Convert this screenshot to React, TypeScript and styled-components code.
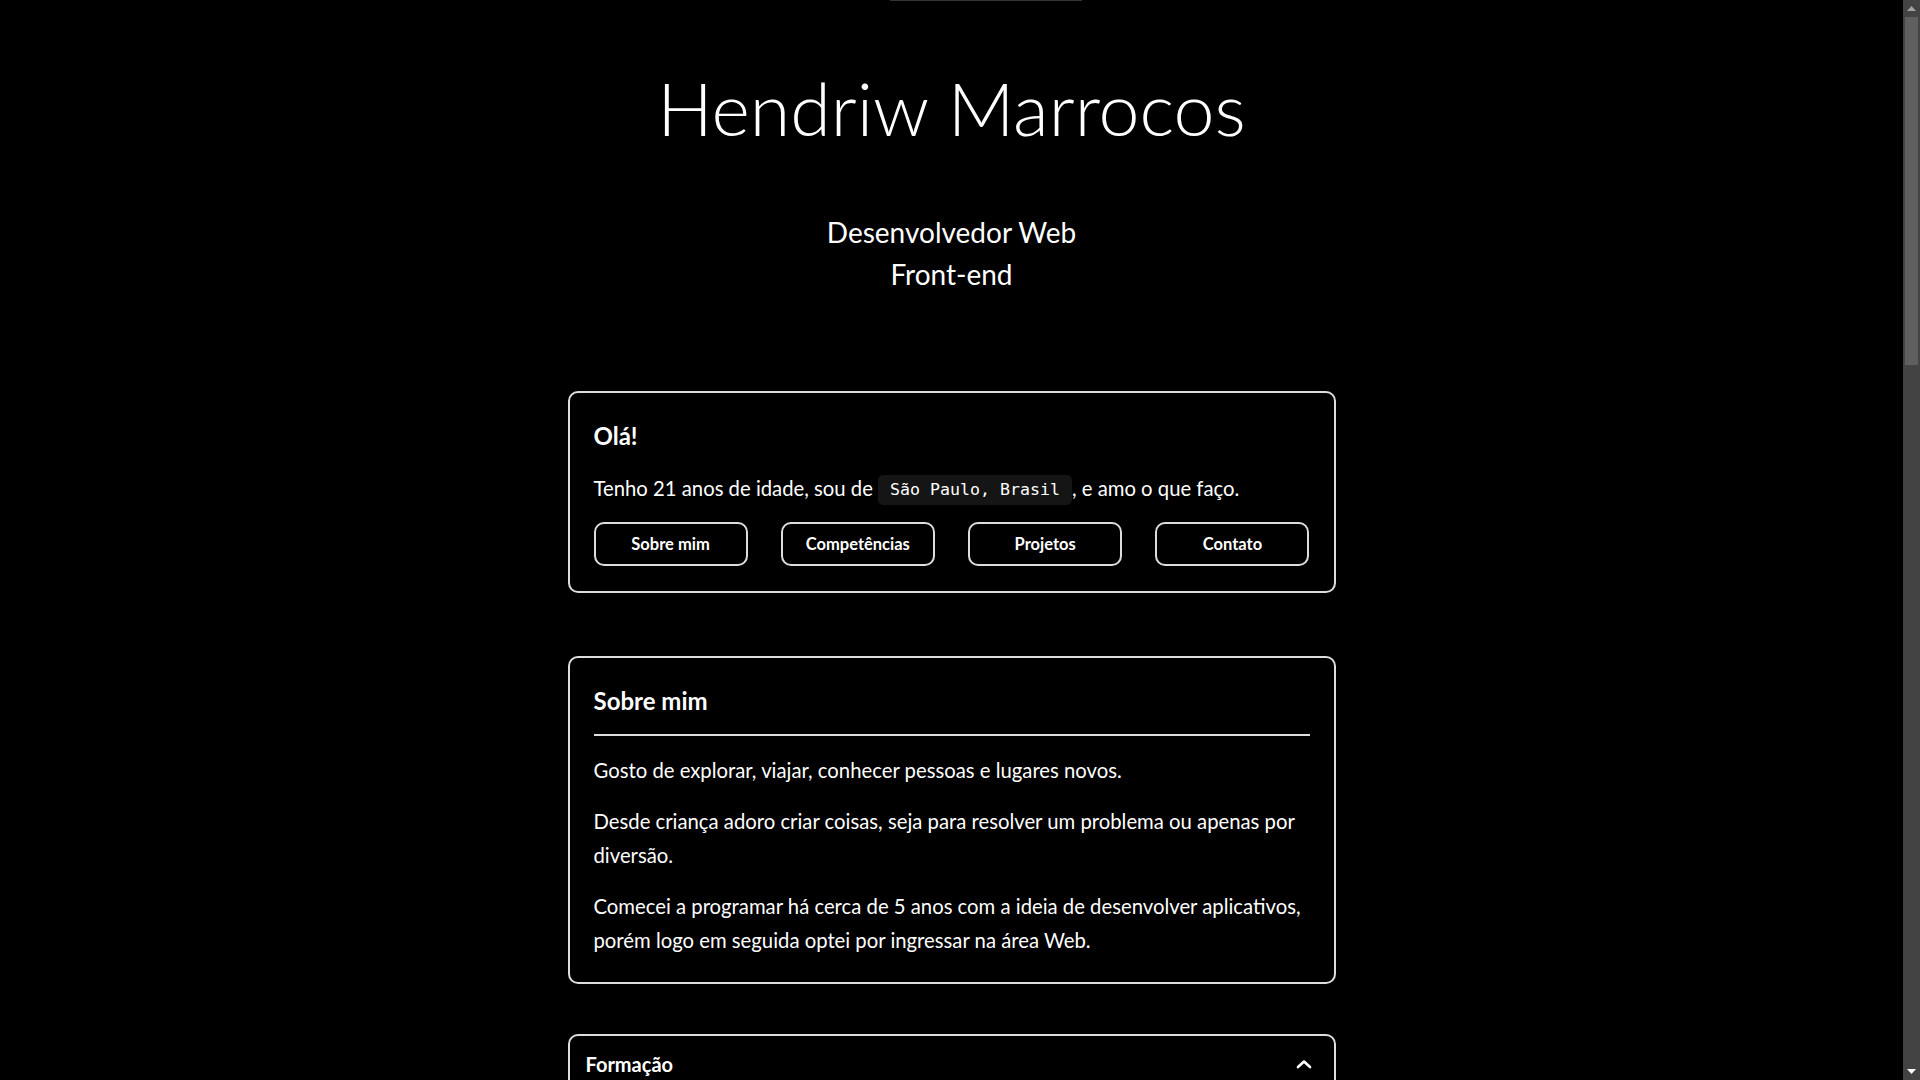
import styled, { createGlobalStyle } from 'styled-components'

const GlobalStyle = createGlobalStyle`
  html {
    background: #000;
    scrollbar-width: none;
  }
  body {
    margin: 0;
    background: #000;
    color: #fff;
    font-family: Lato, 'Noto Sans', sans-serif;
  }
  * {
    box-sizing: border-box;
  }
`

const navLinks = ['Sobre mim', 'Competências', 'Projetos', 'Contato']

const education = [
  { title: 'Análise e Desenvolvimento de Sistemas', place: 'Tecnólogo', period: '2019 - 2022' },
  { title: 'Técnico em Informática', place: 'Ensino Técnico', period: '2016 - 2018' },
]

const skills = ['HTML', 'CSS', 'JavaScript', 'TypeScript', 'React', 'Next.js', 'Styled Components', 'Git']

const projects = [
  { name: 'Portfólio', text: 'Site pessoal feito com React e Styled Components.' },
  { name: 'Lista de tarefas', text: 'Aplicação simples para organizar o dia a dia.' },
  { name: 'Clima', text: 'Consulta da previsão do tempo por cidade.' },
]

function ScrollBar() {
  return (
    <Rail aria-hidden>
      <RailArrow>
        <svg width="9" height="5" viewBox="0 0 9 5">
          <polygon points="0,5 4.5,0 9,5" fill="#a3a3a3" />
        </svg>
      </RailArrow>
      <RailTrack>
        <Thumb />
      </RailTrack>
      <RailArrow>
        <svg width="9" height="5" viewBox="0 0 9 5">
          <polygon points="0,0 9,0 4.5,5" fill="#fff" />
        </svg>
      </RailArrow>
    </Rail>
  )
}

export default function App() {
  return (
    <>
      <GlobalStyle />
      <Shell>
        <Page>
          <TopMark />
          <Header>
            <Name>Hendriw Marrocos</Name>
            <Role>
              Desenvolvedor Web
              <br />
              Front-end
            </Role>
          </Header>

          <Main>
            <Card>
              <CardTitle>Olá!</CardTitle>
              <Text>
                Tenho 21 anos de idade, sou de <Code>São Paulo, Brasil</Code>, e amo o que faço.
              </Text>
              <NavRow>
                {navLinks.map((label) => (
                  <NavButton key={label}>{label}</NavButton>
                ))}
              </NavRow>
            </Card>

            <Card $gapTop={63}>
              <CardTitle>Sobre mim</CardTitle>
              <Rule />
              <Text>Gosto de explorar, viajar, conhecer pessoas e lugares novos.</Text>
              <Text>
                Desde criança adoro criar coisas, seja para resolver um problema ou apenas por
                diversão.
              </Text>
              <Text>
                Comecei a programar há cerca de 5 anos com a ideia de desenvolver aplicativos, porém
                logo em seguida optei por ingressar na área Web.
              </Text>
            </Card>

            <Accordion $gapTop={50}>
              <AccordionHead>
                <AccordionTitle>Formação</AccordionTitle>
                <svg width="16" height="10" viewBox="0 0 16 10" fill="none">
                  <polyline
                    points="2,8 8,2.5 14,8"
                    stroke="#fff"
                    strokeWidth="2.6"
                    strokeLinecap="round"
                    strokeLinejoin="round"
                  />
                </svg>
              </AccordionHead>
              <AccordionBody>
                {education.map((item) => (
                  <EduItem key={item.title}>
                    <EduTitle>{item.title}</EduTitle>
                    <EduMeta>
                      {item.place} · {item.period}
                    </EduMeta>
                  </EduItem>
                ))}
              </AccordionBody>
            </Accordion>

            <Card $gapTop={50}>
              <CardTitle>Competências</CardTitle>
              <Rule />
              <SkillList>
                {skills.map((s) => (
                  <Skill key={s}>{s}</Skill>
                ))}
              </SkillList>
            </Card>

            <Card $gapTop={50}>
              <CardTitle>Projetos</CardTitle>
              <Rule />
              {projects.map((p) => (
                <Project key={p.name}>
                  <EduTitle>{p.name}</EduTitle>
                  <Text>{p.text}</Text>
                </Project>
              ))}
            </Card>

            <Card $gapTop={50}>
              <CardTitle>Contato</CardTitle>
              <Rule />
              <Text>Entre em contato pelas redes abaixo.</Text>
              <NavRow>
                <NavButton>GitHub</NavButton>
                <NavButton>LinkedIn</NavButton>
                <NavButton>E-mail</NavButton>
                <NavButton>Instagram</NavButton>
              </NavRow>
            </Card>
          </Main>
          <Footer>Hendriw Marrocos · 2021</Footer>
        </Page>
        <ScrollBar />
      </Shell>
    </>
  )
}

const Shell = styled.div`
  display: flex;
  align-items: flex-start;
`

const Page = styled.div`
  position: relative;
  flex: 1;
  min-height: 3200px;
  display: flex;
  flex-direction: column;
  align-items: center;
  padding-bottom: 120px;
`

const TopMark = styled.div`
  position: absolute;
  top: 0;
  left: calc(50% - 62px);
  width: 192px;
  height: 1px;
  background: #333;
`

const Rail = styled.aside`
  position: sticky;
  top: 0;
  flex-shrink: 0;
  width: 17px;
  height: 100vh;
  background: #434343;
  display: flex;
  flex-direction: column;
`

const RailArrow = styled.div`
  height: 17px;
  display: flex;
  align-items: center;
  justify-content: center;
`

const RailTrack = styled.div`
  flex: 1;
  padding: 0 2px;
`

const Thumb = styled.div`
  height: 348px;
  background: #5f5f5f;
`

const Header = styled.header`
  display: flex;
  flex-direction: column;
  align-items: center;
  padding-top: 64px;
  text-align: center;
`

const Name = styled.h1`
  margin: 0;
  font-size: 73.5px;
  font-weight: 300;
  line-height: 1.2;
`

const Role = styled.p`
  margin: 59px 0 0;
  font-size: 28px;
  font-weight: 400;
  line-height: 42px;
`

const Main = styled.main`
  width: 768px;
  display: flex;
  flex-direction: column;
  margin-top: 96px;
`

const Card = styled.section<{ $gapTop?: number }>`
  margin-top: ${({ $gapTop }) => $gapTop ?? 0}px;
  border: 2px solid #ddd;
  border-radius: 10px;
  padding: 25px 24px 25px;
  display: flex;
  flex-direction: column;
`

const CardTitle = styled.h2`
  margin: 0;
  font-size: 24px;
  font-weight: 700;
  line-height: 36px;
`

const Rule = styled.hr`
  margin: 15px 0 0;
  border: 0;
  height: 2px;
  background: #ddd;
`

const Text = styled.p`
  margin: 17px 0 0;
  font-size: 20.3px;
  line-height: 34px;
`

const Code = styled.code`
  display: inline-block;
  padding: 0 12px;
  border-radius: 5px;
  background: #151515;
  font-family: 'DejaVu Sans Mono', 'Liberation Mono', monospace;
  font-size: 16.6px;
  line-height: 30px;
  vertical-align: top;
  margin-top: 4px;
`

const NavRow = styled.nav`
  display: flex;
  justify-content: space-between;
  margin-top: 17px;
`

const NavButton = styled.button`
  width: 154px;
  height: 44px;
  border: 2px solid #ddd;
  border-radius: 10px;
  background: #000;
  color: #fff;
  font-family: Lato, 'Noto Sans', sans-serif;
  font-size: 16.5px;
  font-weight: 700;
  cursor: pointer;
`

const Accordion = styled.section<{ $gapTop?: number }>`
  margin-top: ${({ $gapTop }) => $gapTop ?? 0}px;
  border: 2px solid #ddd;
  border-radius: 10px;
`

const AccordionHead = styled.div`
  display: flex;
  align-items: center;
  justify-content: space-between;
  padding: 12px 22px 12px 16px;
`

const AccordionTitle = styled.h3`
  margin: 0;
  font-size: 20px;
  font-weight: 700;
  line-height: 32px;
`

const AccordionBody = styled.div`
  padding: 4px 16px 20px;
  display: flex;
  flex-direction: column;
  gap: 16px;
`

const EduItem = styled.div`
  display: flex;
  flex-direction: column;
  gap: 4px;
`

const EduTitle = styled.h4`
  margin: 0;
  font-size: 19px;
  font-weight: 700;
`

const EduMeta = styled.span`
  font-size: 16px;
  color: #bbb;
`

const SkillList = styled.ul`
  list-style: none;
  margin: 20px 0 0;
  padding: 0;
  display: grid;
  grid-template-columns: repeat(4, 1fr);
  gap: 14px;
`

const Skill = styled.li`
  border: 2px solid #ddd;
  border-radius: 10px;
  padding: 10px;
  text-align: center;
  font-weight: 700;
`

const Project = styled.article`
  margin-top: 20px;
`

const Footer = styled.footer`
  margin-top: auto;
  font-size: 16px;
  color: #888;
`
